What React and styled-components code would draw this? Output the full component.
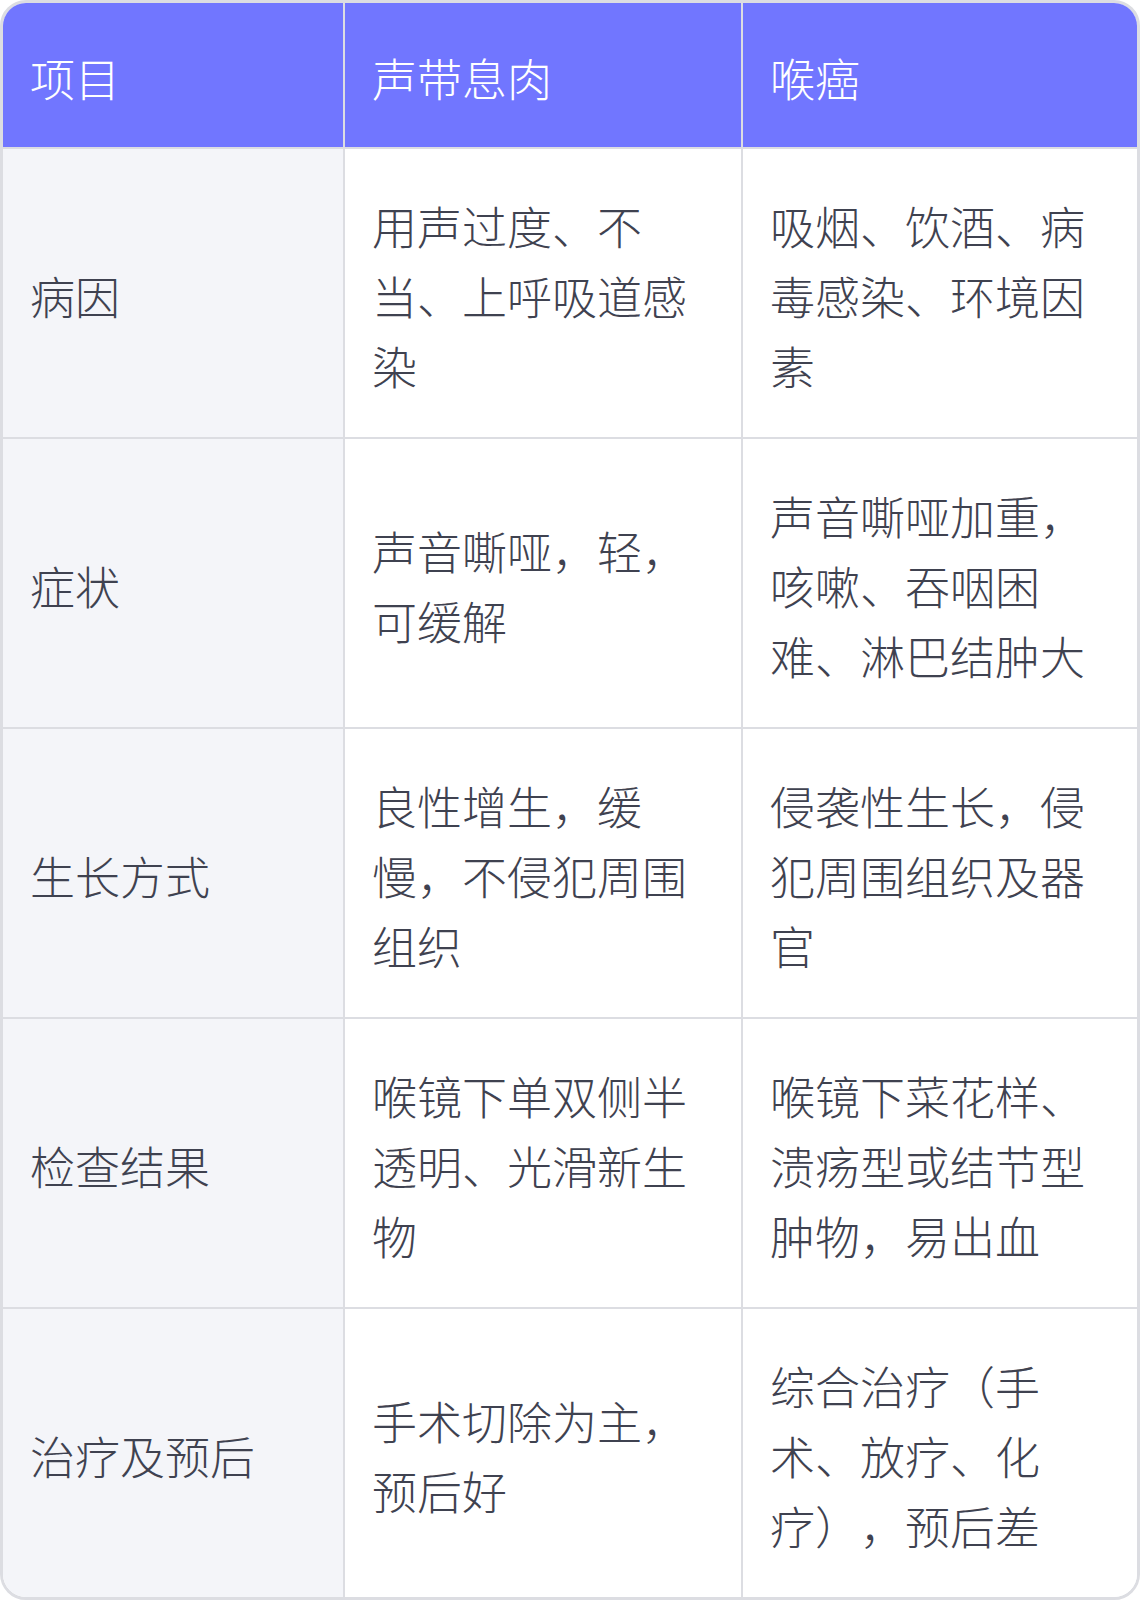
import styled, { createGlobalStyle } from "styled-components";

const GlobalStyle = createGlobalStyle`
  html, body {
    margin: 0;
    padding: 0;
    background: #ffffff;
  }
  body {
    font-family: "Noto Sans CJK SC", "Noto Sans", sans-serif;
  }
`;

const Wrapper = styled.div`
  width: 1140px;
  box-sizing: border-box;
  border: 3px solid #dcdde2;
  border-radius: 26px;
  overflow: hidden;
  background: #ffffff;
`;

const Table = styled.table`
  width: 100%;
  table-layout: fixed;
  border-collapse: separate;
  border-spacing: 0;
  font-size: 45px;
  font-weight: 300;
  line-height: 70px;
  color: #3f4250;
  text-spacing-trim: space-all;
`;

const HeadCell = styled.th`
  background: #7176ff;
  color: #ffffff;
  font-weight: 300;
  text-align: left;
  padding: 40px 24px 34px 27px;
  border-bottom: 2px solid #dcdde2;
  border-right: ${({ $last }) => ($last ? "none" : "2px solid #dcdde2")};
`;

const Cell = styled.td`
  background: ${({ $label }) => ($label ? "#f4f5f9" : "#ffffff")};
  padding: 42px 24px 36px 27px;
  vertical-align: middle;
  border-bottom: ${({ $lastRow }) => ($lastRow ? "none" : "2px solid #dcdde2")};
  border-right: ${({ $last }) => ($last ? "none" : "2px solid #dcdde2")};
`;

const rows = [
  ["病因", "用声过度、不当、上呼吸道感染", "吸烟、饮酒、病毒感染、环境因素"],
  ["症状", "声音嘶哑，轻，可缓解", "声音嘶哑加重，咳嗽、吞咽困难、淋巴结肿大"],
  ["生长方式", "良性增生，缓慢，不侵犯周围组织", "侵袭性生长，侵犯周围组织及器官"],
  ["检查结果", "喉镜下单双侧半透明、光滑新生物", "喉镜下菜花样、溃疡型或结节型肿物，易出血"],
  ["治疗及预后", "手术切除为主，预后好", "综合治疗（手术、放疗、化疗），预后差"],
];

export default function App() {
  return (
    <>
      <GlobalStyle />
      <Wrapper>
        <Table>
          <colgroup>
            <col style={{ width: 342 }} />
            <col style={{ width: 398 }} />
            <col />
          </colgroup>
          <thead>
            <tr>
              <HeadCell>项目</HeadCell>
              <HeadCell>声带息肉</HeadCell>
              <HeadCell $last>喉癌</HeadCell>
            </tr>
          </thead>
          <tbody>
            {rows.map((r, i) => (
              <tr key={r[0]}>
                <Cell $label $lastRow={i === rows.length - 1}>{r[0]}</Cell>
                <Cell $lastRow={i === rows.length - 1}>{r[1]}</Cell>
                <Cell $last $lastRow={i === rows.length - 1}>{r[2]}</Cell>
              </tr>
            ))}
          </tbody>
        </Table>
      </Wrapper>
    </>
  );
}
